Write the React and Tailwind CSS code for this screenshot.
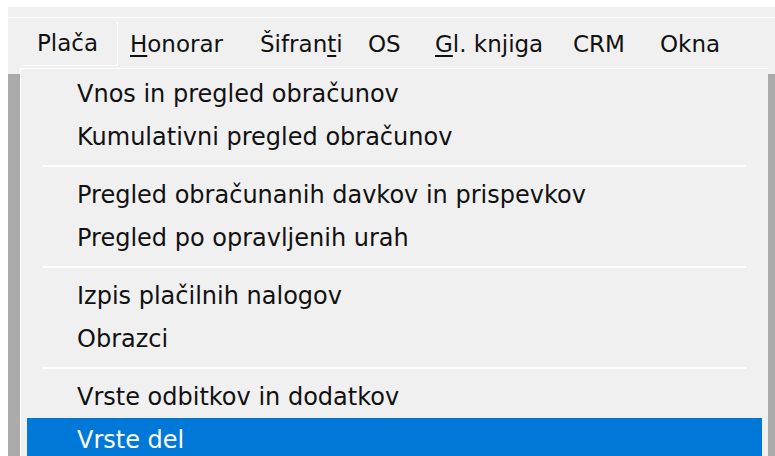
import React from 'react';

const MENUBAR = [
  { label: 'Plača', open: true, w: 'w-[96px] pl-[15px]' },
  { label: 'Honorar', key: 0, w: 'w-[130px] pl-[12px]' },
  { label: 'Šifranti', key: 6, w: 'w-[108px] pl-[12px]' },
  { label: 'OS', w: 'w-[67px] pl-[12px]' },
  { label: 'Gl. knjiga', key: 0, w: 'w-[138px] pl-[12px]' },
  { label: 'CRM', w: 'w-[87px] pl-[12px]' },
  { label: 'Okna', w: 'w-[90px] pl-[12px]' },
];

const GROUPS = [
  ['Vnos in pregled obračunov', 'Kumulativni pregled obračunov'],
  ['Pregled obračunanih davkov in prispevkov', 'Pregled po opravljenih urah'],
  ['Izpis plačilnih nalogov', 'Obrazci'],
  ['Vrste odbitkov in dodatkov', 'Vrste del'],
];

function Label({ text, hot }) {
  if (hot === undefined) return text;
  return (
    <>
      {text.slice(0, hot)}
      <span className="underline underline-offset-[3px]">{text[hot]}</span>
      {text.slice(hot + 1)}
    </>
  );
}

export default function App() {
  const selected = 'Vrste del';

  return (
    <div
      className="relative w-[775px] h-[456px] overflow-hidden bg-white text-[#111]"
      style={{ fontFamily: 'Tahoma, "DejaVu Sans", "Liberation Sans", sans-serif' }}
    >
      <div className="pl-2 pt-[7px] h-full">
        <div className="flex flex-col h-full bg-[#f0f0f0]">
          <div className="h-[10px]" />
          <div className="h-px bg-white" />
          <div className="flex items-end h-[48px] pl-[14px] text-[23px]">
            {MENUBAR.map((m) => (
              <div
                key={m.label}
                className={`${m.w} shrink-0 h-[44px] flex items-center whitespace-nowrap ${
                  m.open ? 'border-r border-b border-white' : ''
                }`}
              >
                <Label text={m.label} hot={m.key} />
              </div>
            ))}
          </div>
          <div className="h-[8px]" />
          <div className="flex-1 bg-[#ababab]" />
        </div>
      </div>

      {/* open drop-down */}
      <div className="absolute left-[20px] top-[68px] w-[748px] bottom-0 bg-[#f0f0f0] border-t border-l border-white pt-[3px] px-[6px] text-[24px]">
        {GROUPS.map((group, gi) => (
          <div key={gi}>
            {gi > 0 && (
              <div className="h-[15px] flex items-center px-[16px]">
                <div className="h-[2px] w-full bg-white" />
              </div>
            )}
            {group.map((item) => (
              <div
                key={item}
                className={`h-[43px] flex items-center pl-[50px] whitespace-nowrap ${
                  item === selected ? 'bg-[#0078d7] text-white' : ''
                }`}
              >
                {item}
              </div>
            ))}
          </div>
        ))}
      </div>
    </div>
  );
}
